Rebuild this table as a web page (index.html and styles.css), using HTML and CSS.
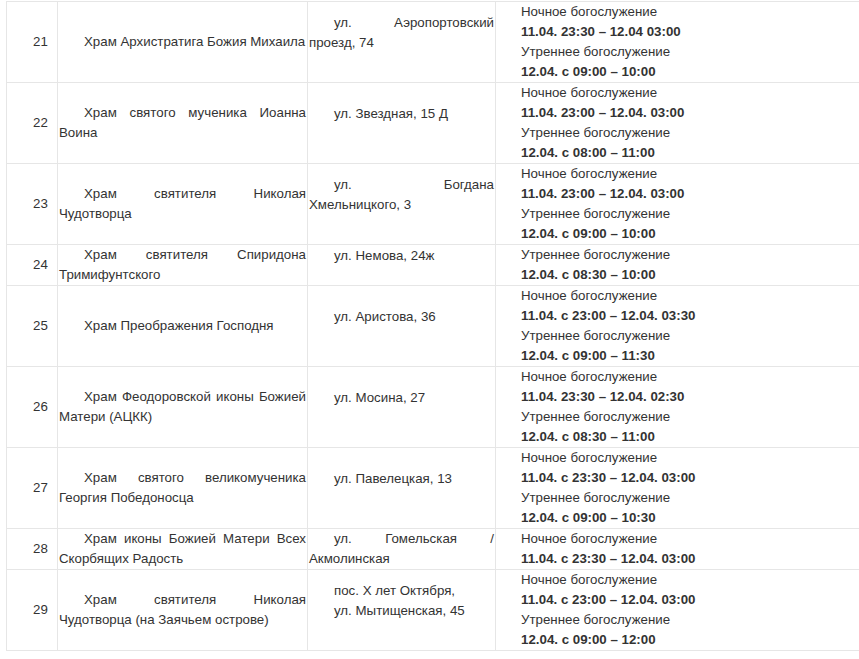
FILE: index.html
```html
<!DOCTYPE html>
<html lang="ru">
<head>
<meta charset="utf-8">
<title>Расписание богослужений</title>
<link rel="stylesheet" href="styles.css">
</head>
<body>
<table class="schedule">
  <colgroup>
    <col class="c-num">
    <col class="c-name">
    <col class="c-addr">
    <col class="c-time">
  </colgroup>
  <tbody>
    <tr>
      <td class="num"><p>21</p></td>
      <td class="name"><p class="nowrap">Храм Архистратига Божия Михаила</p></td>
      <td class="addr"><p class="gap">ул. Аэропортовский проезд, 74</p></td>
      <td class="time"><p>Ночное богослужение</p><p><b>11.04. 23:30 – 12.04 03:00</b></p><p>Утреннее богослужение</p><p><b>12.04. с 09:00 – 10:00</b></p></td>
    </tr>
    <tr>
      <td class="num"><p>22</p></td>
      <td class="name"><p>Храм святого мученика Иоанна Воина</p></td>
      <td class="addr"><p class="gap">ул. Звездная, 15 Д</p></td>
      <td class="time"><p>Ночное богослужение</p><p><b>11.04. 23:00 – 12.04. 03:00</b></p><p>Утреннее богослужение</p><p><b>12.04. с 08:00 – 11:00</b></p></td>
    </tr>
    <tr>
      <td class="num"><p>23</p></td>
      <td class="name"><p>Храм святителя Николая Чудотворца</p></td>
      <td class="addr"><p class="gap">ул. Богдана Хмельницкого, 3</p></td>
      <td class="time"><p>Ночное богослужение</p><p><b>11.04. 23:00 – 12.04. 03:00</b></p><p>Утреннее богослужение</p><p><b>12.04. с 09:00 – 10:00</b></p></td>
    </tr>
    <tr>
      <td class="num"><p>24</p></td>
      <td class="name"><p>Храм святителя Спиридона Тримифунтского</p></td>
      <td class="addr"><p class="gap">ул. Немова, 24ж</p></td>
      <td class="time"><p>Утреннее богослужение</p><p><b>12.04. с 08:30 – 10:00</b></p></td>
    </tr>
    <tr>
      <td class="num"><p>25</p></td>
      <td class="name"><p>Храм Преображения Господня</p></td>
      <td class="addr"><p class="gap">ул. Аристова, 36</p></td>
      <td class="time"><p>Ночное богослужение</p><p><b>11.04. с 23:00 – 12.04. 03:30</b></p><p>Утреннее богослужение</p><p><b>12.04. с 09:00 – 11:30</b></p></td>
    </tr>
    <tr>
      <td class="num"><p>26</p></td>
      <td class="name"><p>Храм Феодоровской иконы Божией Матери (АЦКК)</p></td>
      <td class="addr"><p class="gap">ул. Мосина, 27</p></td>
      <td class="time"><p>Ночное богослужение</p><p><b>11.04. 23:30 – 12.04. 02:30</b></p><p>Утреннее богослужение</p><p><b>12.04. с 08:30 – 11:00</b></p></td>
    </tr>
    <tr>
      <td class="num"><p>27</p></td>
      <td class="name"><p>Храм святого великомученика Георгия Победоносца</p></td>
      <td class="addr"><p class="gap">ул. Павелецкая, 13</p></td>
      <td class="time"><p>Ночное богослужение</p><p><b>11.04. с 23:30 – 12.04. 03:00</b></p><p>Утреннее богослужение</p><p><b>12.04. с 09:00 – 10:30</b></p></td>
    </tr>
    <tr>
      <td class="num"><p>28</p></td>
      <td class="name"><p>Храм иконы Божией Матери Всех Скорбящих Радость</p></td>
      <td class="addr"><p>ул. Гомельская / Акмолинская</p></td>
      <td class="time"><p>Ночное богослужение</p><p><b>11.04. с 23:30 – 12.04. 03:00</b></p></td>
    </tr>
    <tr>
      <td class="num"><p>29</p></td>
      <td class="name"><p>Храм святителя Николая Чудотворца (на Заячьем острове)</p></td>
      <td class="addr"><p>пос. Х лет Октября,</p><p class="gap">ул. Мытищенская, 45</p></td>
      <td class="time"><p>Ночное богослужение</p><p><b>11.04. с 23:00 – 12.04. 03:00</b></p><p>Утреннее богослужение</p><p><b>12.04. с 09:00 – 12:00</b></p></td>
    </tr>
  </tbody>
</table>
</body>
</html>
```

FILE: styles.css
```css
html, body {
  margin: 0;
  padding: 0;
  background: #ffffff;
  overflow: hidden;
}

body {
  font-family: "Liberation Sans", Arial, sans-serif;
  font-size: 13.3px;
  line-height: 20px;
  color: #333333;
}

.schedule {
  border-collapse: collapse;
  table-layout: fixed;
  width: 854px;
  margin: 1px 0 0 6px;
}

.c-num { width: 51px; }
.c-name { width: 250px; }
.c-addr { width: 188px; }
.c-time { width: 365px; }

.schedule td {
  border: 1px solid #e6e6e6;
  padding: 0 1px;
  vertical-align: middle;
}

.schedule p {
  margin: 0;
  text-indent: 25px;
}

.name p,
.addr p {
  text-align: justify;
}

.addr p.gap {
  margin-bottom: 19px;
}

.time p {
  text-indent: 24px;
}

.time b {
  font-weight: bold;
}

.nowrap {
  white-space: nowrap;
}
```
